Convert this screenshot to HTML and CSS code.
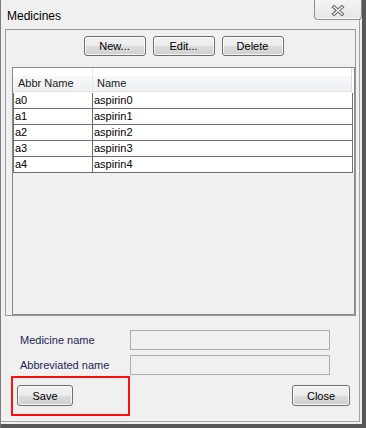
FILE: index.html
```html
<!DOCTYPE html>
<html lang="en">
<head>
    <meta charset="UTF-8">
    <meta name="viewport" content="width=device-width, initial-scale=1.0">
    <title>Medicines</title>
    <link rel="stylesheet" href="styles.css">
</head>
<body>
    <div class="window">
        <div class="frame">
            <div class="titlebar">
                <span class="title">Medicines</span>
                <button class="close-x" aria-label="Close">
                    <svg width="14" height="11" viewBox="0 0 14 11">
                        <path d="M3 2 L11 9 M11 2 L3 9" stroke="#6a6a6a" stroke-width="3.6" stroke-linecap="square" fill="none"/>
                        <path d="M3 2 L11 9 M11 2 L3 9" stroke="#f4f4f4" stroke-width="1.5" stroke-linecap="square" fill="none"/>
                    </svg>
                </button>
            </div>

            <div class="group">
                <div class="toolbar">
                    <button class="btn">New...</button>
                    <button class="btn">Edit...</button>
                    <button class="btn">Delete</button>
                </div>
                <div class="grid">
                    <div class="grid-head">
                        <div class="head-cell col-abbr">Abbr Name</div>
                        <div class="head-cell col-name">Name</div>
                    </div>
                    <div class="grid-rows">
                        <div class="row"><div class="cell col-abbr">a0</div><div class="cell col-name">aspirin0</div></div>
                        <div class="row"><div class="cell col-abbr">a1</div><div class="cell col-name">aspirin1</div></div>
                        <div class="row"><div class="cell col-abbr">a2</div><div class="cell col-name">aspirin2</div></div>
                        <div class="row"><div class="cell col-abbr">a3</div><div class="cell col-name">aspirin3</div></div>
                        <div class="row"><div class="cell col-abbr">a4</div><div class="cell col-name">aspirin4</div></div>
                    </div>
                </div>
            </div>

            <div class="form">
                <div class="field">
                    <label class="field-label">Medicine name</label>
                    <input class="field-input" type="text" disabled>
                </div>
                <div class="field">
                    <label class="field-label">Abbreviated name</label>
                    <input class="field-input" type="text" disabled>
                </div>
            </div>

            <div class="actions">
                <button class="btn btn-save">Save</button>
                <button class="btn btn-close">Close</button>
            </div>

            <!-- annotation box round the Save button -->
            <div class="highlight"></div>
        </div>
    </div>
</body>
</html>
```

FILE: styles.css
```css
body {
    margin: 0;
    font-family: "Liberation Sans", Arial, sans-serif;
    font-size: 11px;
    background: #fff;
}
.window {
    width: 366px;
    height: 428px;
    box-sizing: border-box;
    background: #f0f0f0;
    border-left: 1px solid #7d7d7d;
    border-right: 4px solid #585858;
    border-bottom: 4px solid #585858;
}
.frame {
    position: relative;
    width: 359px;
    height: 422px;
    box-sizing: border-box;
    padding-left: 4px;
    border-right: 1px solid #a3a3a3;
    border-bottom: 1px solid #a3a3a3;
    display: flex;
    flex-direction: column;
}

/* title bar */
.titlebar {
    height: 29px;
    display: flex;
    justify-content: space-between;
    align-items: flex-start;
    margin-right: -3px;
}
.title {
    font-size: 12px;
    line-height: 14px;
    padding: 9px 0 0 2px;
    color: #000;
}
.close-x {
    width: 48px;
    height: 20px;
    padding: 0;
    border: 1px solid #8e8e8e;
    border-top: none;
    border-radius: 0 0 4px 4px;
    background: linear-gradient(#f4f4f4, #e6e6e6);
    box-shadow: inset 0 -1px 0 #fafafa;
    display: flex;
    align-items: center;
    justify-content: center;
}
.close-x svg {
    display: block;
    margin-top: 2px;
}

/* buttons */
.btn {
    height: 20px;
    padding: 0;
    font-family: "Liberation Sans", Arial, sans-serif;
    font-size: 11px;
    color: #000;
    border: 1px solid #707070;
    border-radius: 3px;
    background: linear-gradient(#f3f3f3 0%, #ebebeb 50%, #dddddd 51%, #cfcfcf 100%);
    box-shadow: inset 0 0 0 1px rgba(255, 255, 255, 0.75);
}

/* group box with list */
.group {
    width: 351px;
    height: 287px;
    box-sizing: border-box;
    border: 1px solid #999;
    padding-top: 6px;
    display: flex;
    flex-direction: column;
}
.toolbar {
    display: flex;
    justify-content: center;
    gap: 7px;
    padding-left: 6px;
}
.toolbar .btn {
    width: 62px;
}
.grid {
    flex: 1;
    margin: 11px 0 0 6px;
    border: 1px solid #828790;
    background: #f0f0f0;
}
.grid-head {
    display: flex;
    height: 24px;
    box-sizing: border-box;
    border-bottom: 1px solid #e4e4e4;
    background: linear-gradient(#ffffff 0, #ffffff 8px, #f7f8f9 8px, #eff0f2 100%);
    margin-right: 2px;
    box-shadow: 2px 0 0 #fff;
}
.head-cell {
    box-sizing: border-box;
    padding: 8px 0 0 5px;
    line-height: 14px;
    color: #1a1a1a;
}
.head-cell.col-abbr {
    width: 80px;
    border-right: 1px solid #e8e8e8;
}
.head-cell.col-name {
    flex: 1;
    padding-left: 4px;
    border-right: 1px solid #dcdcdc;
}
.grid-rows {
    width: 340px;
    padding-top: 1px;
    background: #fff;
    box-shadow: 1px 0 0 #fff;
}
.row {
    display: flex;
    height: 16px;
    box-sizing: border-box;
    border-bottom: 1px solid #6f6f6f;
}
.cell {
    line-height: 15px;
    color: #000;
    box-sizing: border-box;
}
.cell.col-abbr {
    width: 80px;
    padding-left: 1px;
    border-left: 1px solid #6f6f6f;
    border-right: 1px solid #6f6f6f;
}
.cell.col-name {
    flex: 1;
    padding-left: 1px;
    border-right: 1px solid #6f6f6f;
}

/* edit fields */
.form {
    margin-top: 14px;
    display: flex;
    flex-direction: column;
    gap: 5px;
}
.field {
    display: flex;
    align-items: center;
    padding-left: 15px;
}
.field-label {
    width: 110px;
    color: #1e1e58;
}
.field-input {
    width: 200px;
    height: 20px;
    box-sizing: border-box;
    margin: 0;
    border: 1px solid #adadad;
    background: #f0f0f0;
}

.actions {
    margin-top: 10px;
    display: flex;
    justify-content: space-between;
    padding: 0 9px 0 12px;
}
.actions .btn {
    height: 21px;
}
.btn-save {
    width: 56px;
}
.btn-close {
    width: 58px;
}

.highlight {
    position: absolute;
    left: 10px;
    top: 376px;
    width: 119px;
    height: 40px;
    box-sizing: border-box;
    border: 2px solid #ff1010;
}
```
